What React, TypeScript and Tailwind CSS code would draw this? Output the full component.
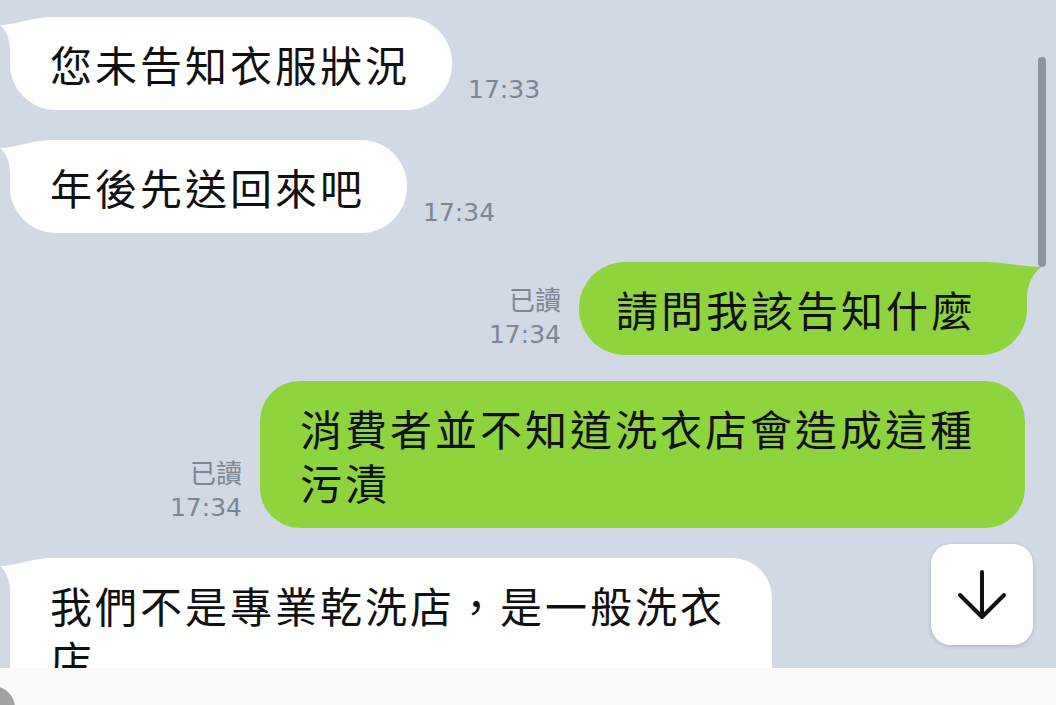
import React from "react";

function LeftTail() {
  return (
    <svg
      className="absolute left-[-10px] top-0"
      width="56"
      height="50"
      viewBox="0 0 56 50"
    >
      <path d="M56 0 C30 0 16 8 0 8 C7 14 10 23 10 34 L10 50 L56 50 Z" fill="#ffffff" />
    </svg>
  );
}

function RightTail() {
  return (
    <svg
      className="absolute right-[-14px] top-0"
      width="60"
      height="50"
      viewBox="0 0 60 50"
    >
      <path d="M0 0 C26 0 42 5 60 5 C52 12 46 22 46 34 L46 50 L0 50 Z" fill="#8ed43c" />
    </svg>
  );
}

const timeCls =
  "text-[25px] leading-[25px] text-[#7c8694] font-['DejaVu_Sans',sans-serif]";
const readCls =
  "text-[26px] leading-[30px] text-[#7c8694] font-['Noto_Sans_CJK_TC',sans-serif]";
const bubbleText = "text-[42px] leading-[54px] tracking-[3px] whitespace-nowrap";

export default function App() {
  return (
    <div className="relative w-[1056px] h-[705px] overflow-hidden bg-[#d0d9e4] font-['Noto_Sans_CJK_TC','Noto_Sans_CJK_SC',sans-serif] text-[#111111]">
      <div className="flex flex-col h-[668px] overflow-hidden">
        {/* Row 1 */}
        <div className="flex items-end gap-[16px] pl-[10px] mt-[17px]">
          <div className={`relative bg-white rounded-[46px] pl-[40px] pr-[42px] pt-[20px] pb-[19px] ${bubbleText}`}>
            <LeftTail />
            <span className="relative">您未告知衣服狀況</span>
          </div>
          <span className={`mb-[8px] ${timeCls}`}>17:33</span>
        </div>

        {/* Row 2 */}
        <div className="flex items-end gap-[16px] pl-[10px] mt-[30px]">
          <div className={`relative bg-white rounded-[46px] pl-[40px] pr-[42px] pt-[20px] pb-[19px] ${bubbleText}`}>
            <LeftTail />
            <span className="relative">年後先送回來吧</span>
          </div>
          <span className={`mb-[8px] ${timeCls}`}>17:34</span>
        </div>

        {/* Row 3 */}
        <div className="flex items-end justify-end gap-[18px] pr-[29px] mt-[29px]">
          <div className="flex flex-col items-end mb-[8px]">
            <span className={`${readCls} mb-[8px]`}>已讀</span>
            <span className={timeCls}>17:34</span>
          </div>
          <div className={`relative bg-[#8ed43c] rounded-[46px] pl-[37px] pr-[51px] pt-[20px] pb-[19px] ${bubbleText}`}>
            <RightTail />
            <span className="relative">請問我該告知什麼</span>
          </div>
        </div>

        {/* Row 4 */}
        <div className="flex items-end justify-end gap-[18px] pr-[31px] mt-[26px]">
          <div className="flex flex-col items-end mb-[8px]">
            <span className={`${readCls} mb-[8px]`}>已讀</span>
            <span className={timeCls}>17:34</span>
          </div>
          <div className={`relative bg-[#8ed43c] rounded-[40px] pl-[40px] pr-[50px] pt-[20px] pb-[19px] ${bubbleText}`}>
            <span className="relative">
              消費者並不知道洗衣店會造成這種
              <br />
              污漬
            </span>
          </div>
        </div>

        {/* Row 5 */}
        <div className="flex items-end gap-[16px] pl-[10px] mt-[30px]">
          <div className={`relative bg-white rounded-[40px] pl-[40px] pr-[47px] pt-[20px] pb-[19px] ${bubbleText}`}>
            <LeftTail />
            <span className="relative">
              我們不是專業乾洗店，是一般洗衣
              <br />
              店
            </span>
          </div>
        </div>
      </div>

      {/* Bottom bar */}
      <div className="relative h-[37px] bg-[#fafafa] overflow-hidden">
        <div className="absolute left-[-29px] top-[18px] w-[44px] h-[44px] rounded-full bg-[#a3a3a3]" />
      </div>

      {/* Scrollbar */}
      <div className="absolute left-[1038px] top-[57px] w-[8px] h-[210px] rounded-full bg-[#8e949d]" />

      {/* Scroll-down button */}
      <div className="absolute left-[931px] top-[544px] w-[102px] h-[101px] rounded-[20px] bg-white shadow-[0_1px_4px_rgba(0,0,0,0.18)] flex items-center justify-center">
        <svg width="102" height="101" viewBox="0 0 102 101" fill="none">
          <path
            d="M51 28 L51 73 M29 51 L51 73 L73 51"
            stroke="#111111"
            strokeWidth="4"
            strokeLinecap="round"
            strokeLinejoin="round"
          />
        </svg>
      </div>
    </div>
  );
}
